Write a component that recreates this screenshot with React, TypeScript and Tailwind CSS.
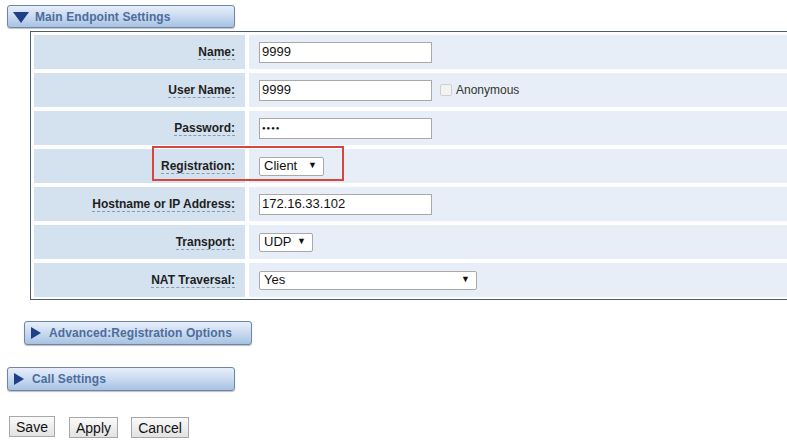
import type { ReactNode } from "react";

const font = { fontFamily: '"Liberation Sans", Arial, sans-serif' };

const SectionBar = ({ title, open, width, height }: { title: string; open?: boolean; width: string; height: string }) => (
  <div
    className={`${width} ${height} flex items-center gap-[6px] pl-[5px] rounded-[3px] border border-[#6f86a6] bg-gradient-to-b from-[#e6eefa] via-[#c9daf0] to-[#a7c2e3] shadow-[0_1px_1px_rgba(0,0,0,0.25)]`}
  >
    {open ? (
      <svg width="16" height="11" viewBox="0 0 16 11" className="mt-[1px]">
        <polygon points="0,0 16,0 8,11" fill="#1f3f86" />
      </svg>
    ) : (
      <svg width="10" height="12" viewBox="0 0 10 12" className="ml-[1px] mr-[2px]">
        <polygon points="0,0 10,6 0,12" fill="#1f3f86" />
      </svg>
    )}
    <span className="text-[12px] font-bold text-[#4d6d9c] tracking-[0.1px]">{title}</span>
  </div>
);

const Row = ({ label, children }: { label: string; children: ReactNode }) => (
  <div className="flex gap-[4px] h-[34px]">
    <div className="w-[211px] shrink-0 bg-[#d4e1ee] flex items-center justify-end pr-[10px]">
      <span className="text-[12px] font-bold text-[#1e1e1e] border-b border-dashed border-[#8a9bb0] leading-[14px]">
        {label}
      </span>
    </div>
    <div className="flex-1 bg-[#e8eef7] flex items-center pl-[10px]">{children}</div>
  </div>
);

const TextBox = ({ value, small }: { value: string; small?: boolean }) => (
  <div className="w-[173px] h-[21px] bg-white border border-[#a9a9a9] flex items-center pl-[2px]">
    <span className={small ? "text-[6px] tracking-[1px] text-[#111]" : "text-[13px] text-[#111]"}>{value}</span>
  </div>
);

const Dropdown = ({ value, width }: { value: string; width: string }) => (
  <div className={`${width} h-[19px] bg-white border border-[#a9a9a9] rounded-[2px] flex items-center justify-between pl-[4px] pr-[6px]`}>
    <span className="text-[13px] text-[#111]">{value}</span>
    <span className="text-[9px] text-[#111]">▼</span>
  </div>
);

const PlainButton = ({ label, width }: { label: string; width: string }) => (
  <button className={`${width} h-[21px] border border-[#a8a8a8] bg-gradient-to-b from-[#fafafa] to-[#e2e2e2] text-[14px] text-[#111]`}>
    {label}
  </button>
);

export default function App() {
  return (
    <div className="w-[787px] h-[443px] overflow-hidden bg-white" style={font}>
      <div className="pt-[5px] pl-[7px]">
        <SectionBar title="Main Endpoint Settings" open width="w-[228px]" height="h-[23px]" />
      </div>

      <div className="ml-[30px] mt-[3px] w-[800px] border-t border-l border-b border-[#4f5e66] pt-[3px] pl-[3px] pb-[2px] flex flex-col gap-[4px]">
        <Row label="Name:">
          <TextBox value="9999" />
        </Row>
        <Row label="User Name:">
          <TextBox value="9999" />
          <div className="ml-[8px] w-[12px] h-[12px] border border-[#cfcfcf] bg-[#f3f3f3] rounded-[2px]" />
          <span className="ml-[4px] text-[12px] text-[#333]">Anonymous</span>
        </Row>
        <Row label="Password:">
          <TextBox value="●●●●" small />
        </Row>
        <div className="relative">
          <div className="absolute left-[118px] top-[-3px] w-[192px] h-[35px] border-2 border-[#d6463d] pointer-events-none z-10" />
          <Row label="Registration:">
            <Dropdown value="Client" width="w-[65px]" />
          </Row>
        </div>
        <Row label="Hostname or IP Address:">
          <TextBox value="172.16.33.102" />
        </Row>
        <Row label="Transport:">
          <Dropdown value="UDP" width="w-[54px]" />
        </Row>
        <Row label="NAT Traversal:">
          <Dropdown value="Yes" width="w-[218px]" />
        </Row>
      </div>

      <div className="pl-[24px] mt-[21px]">
        <SectionBar title="Advanced:Registration Options" width="w-[228px]" height="h-[24px]" />
      </div>
      <div className="pl-[7px] mt-[22px]">
        <SectionBar title="Call Settings" width="w-[228px]" height="h-[24px]" />
      </div>

      <div className="pl-[9px] mt-[25px] flex">
        <PlainButton label="Save" width="w-[46px]" />
        <div className="ml-[14px]">
          <PlainButton label="Apply" width="w-[49px]" />
        </div>
        <div className="ml-[13px]">
          <PlainButton label="Cancel" width="w-[58px]" />
        </div>
      </div>
    </div>
  );
}
